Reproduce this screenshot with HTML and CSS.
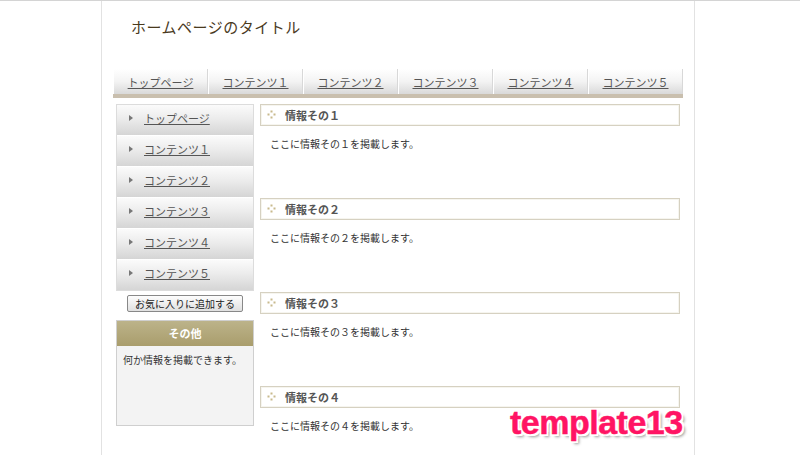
FILE: index.html
```html
<!DOCTYPE html>
<html lang="ja">
<head>
    <meta charset="UTF-8">
    <meta name="viewport" content="width=device-width, initial-scale=1.0">
    <title>ホームページのタイトル</title>
    <link rel="stylesheet" href="styles.css">
</head>
<body>
    <div class="wrapper">
        <div class="header">
            <h1>ホームページのタイトル</h1>
        </div>
        <ul class="nav">
            <li><a href="#">トップページ</a></li>
            <li><a href="#">コンテンツ１</a></li>
            <li><a href="#">コンテンツ２</a></li>
            <li><a href="#">コンテンツ３</a></li>
            <li><a href="#">コンテンツ４</a></li>
            <li><a href="#">コンテンツ５</a></li>
        </ul>
        <div class="columns">
            <div class="side">
                <ul class="menu">
                    <li><a href="#">トップページ</a></li>
                    <li><a href="#">コンテンツ１</a></li>
                    <li><a href="#">コンテンツ２</a></li>
                    <li><a href="#">コンテンツ３</a></li>
                    <li><a href="#">コンテンツ４</a></li>
                    <li><a href="#">コンテンツ５</a></li>
                </ul>
                <div class="fav"><button type="button">お気に入りに追加する</button></div>
                <div class="box">
                    <h3>その他</h3>
                    <p>何か情報を掲載できます。</p>
                </div>
            </div>
            <div class="main">
                <div class="section">
                    <h2><svg class="mark" width="9" height="9" viewBox="0 0 9 9"><rect x="3.5" y="0.5" width="2" height="2"/><rect x="0.5" y="3.5" width="2" height="2"/><rect x="6.5" y="3.5" width="2" height="2"/><rect x="3.5" y="6.5" width="2" height="2"/></svg>情報その１</h2>
                    <p>ここに情報その１を掲載します。</p>
                </div>
                <div class="section">
                    <h2><svg class="mark" width="9" height="9" viewBox="0 0 9 9"><rect x="3.5" y="0.5" width="2" height="2"/><rect x="0.5" y="3.5" width="2" height="2"/><rect x="6.5" y="3.5" width="2" height="2"/><rect x="3.5" y="6.5" width="2" height="2"/></svg>情報その２</h2>
                    <p>ここに情報その２を掲載します。</p>
                </div>
                <div class="section">
                    <h2><svg class="mark" width="9" height="9" viewBox="0 0 9 9"><rect x="3.5" y="0.5" width="2" height="2"/><rect x="0.5" y="3.5" width="2" height="2"/><rect x="6.5" y="3.5" width="2" height="2"/><rect x="3.5" y="6.5" width="2" height="2"/></svg>情報その３</h2>
                    <p>ここに情報その３を掲載します。</p>
                </div>
                <div class="section">
                    <h2><svg class="mark" width="9" height="9" viewBox="0 0 9 9"><rect x="3.5" y="0.5" width="2" height="2"/><rect x="0.5" y="3.5" width="2" height="2"/><rect x="6.5" y="3.5" width="2" height="2"/><rect x="3.5" y="6.5" width="2" height="2"/></svg>情報その４</h2>
                    <p>ここに情報その４を掲載します。</p>
                </div>
            </div>
        </div>
    </div>
    <div class="stamp">template13</div>
</body>
</html>
```

FILE: styles.css
```css
html {
    height: 455px;
    overflow: hidden;
}
body {
    font-family: "Noto Sans CJK JP", "Noto Sans", sans-serif;
    margin: 0;
    padding: 0 4px 0 0;
    border-top: 1px solid #d4d4d4;
    background: #fff;
    color: #333;
    height: 455px;
    box-sizing: border-box;
    overflow: hidden;
}
.wrapper {
    width: 570px;
    height: 100%;
    margin: 0 auto;
    padding: 0 11px;
    border-left: 1px solid #e2e2e2;
    border-right: 1px solid #e2e2e2;
    background: #fff;
}
.header {
    height: 68px;
}
.header h1 {
    margin: 0;
    padding: 15px 0 0 18px;
    font-size: 15px;
    font-weight: normal;
    line-height: 22px;
    color: #4a3a1e;
    letter-spacing: 0.5px;
}
.nav {
    display: flex;
    margin: 0;
    padding: 0;
    list-style: none;
    border-bottom: 4px solid #c9bfae;
}
.nav li {
    width: 95px;
    height: 25px;
    box-sizing: border-box;
    display: flex;
    justify-content: center;
    align-items: center;
    background: linear-gradient(#ffffff, #f3f3f3 50%, #d9d9d9);
    border-left: 1px solid #ffffff;
    border-right: 1px solid #d8d8d8;
}
.nav a {
    font-size: 11px;
    color: #555;
}
.columns {
    display: flex;
    gap: 6px;
    padding: 6px 3px 0;
}
.side {
    width: 138px;
}
.menu {
    margin: 0;
    padding: 0;
    list-style: none;
    border: 1px solid #dcdcdc;
    border-top: 0;
}
.menu li {
    height: 31px;
    box-sizing: border-box;
    display: flex;
    align-items: center;
    padding: 0 0 5px 12px;
    background: linear-gradient(#fbfbfb, #ececec 45%, #d5d5d5);
    border-top: 1px solid #ffffff;
}
.menu li:first-child {
    border-top: 1px solid #dcdcdc;
}
.menu li::before {
    content: "";
    width: 0;
    height: 0;
    border-left: 4px solid #777;
    border-top: 3px solid transparent;
    border-bottom: 3px solid transparent;
    margin-right: 11px;
}
.menu a {
    font-size: 11px;
    color: #555;
}
.fav {
    display: flex;
    justify-content: center;
    padding: 4px 0 8px;
}
.fav button {
    font-family: inherit;
    font-size: 10px;
    line-height: 12px;
    height: 17px;
    padding: 0 7px;
    color: #222;
    border: 1px solid #888;
    border-radius: 2px;
    background: linear-gradient(#fdfdfd, #e0e0e0);
}
.box {
    border: 1px solid #cfcfcf;
    background: #f3f3f3;
    height: 106px;
    box-sizing: border-box;
}
.box h3 {
    margin: 0;
    height: 25px;
    line-height: 25px;
    text-align: center;
    font-size: 11px;
    color: #fff;
    background: linear-gradient(#bcb38a, #a99d6c);
}
.box p {
    margin: 0;
    padding: 6px 6px;
    font-size: 10px;
    color: #333;
}
.main {
    width: 420px;
}
.section {
    height: 94px;
}
.section h2 {
    margin: 0;
    height: 22px;
    box-sizing: border-box;
    display: flex;
    align-items: center;
    padding: 0 0 1px 6px;
    border: 1px solid #d6d1c1;
    box-shadow: inset 0 0 0 1px #f6f5ef;
    font-size: 11px;
    color: #555;
}
.mark {
    fill: #c8b98c;
    margin-right: 9px;
}
.section p {
    margin: 0;
    padding: 10px 10px;
    font-size: 10px;
    color: #333;
}
.stamp {
    position: absolute;
    left: 510px;
    top: 403px;
    font-family: "Liberation Sans", Arial, sans-serif;
    font-weight: bold;
    font-size: 34px;
    color: #ff1464;
    letter-spacing: -0.5px;
    -webkit-text-stroke: 0.5px #ff1464;
    text-shadow: 2px 2px 0 #fff, -2px -2px 0 #fff, 2px -2px 0 #fff, -2px 2px 0 #fff, 3px 3px 3px #999;
}
```
